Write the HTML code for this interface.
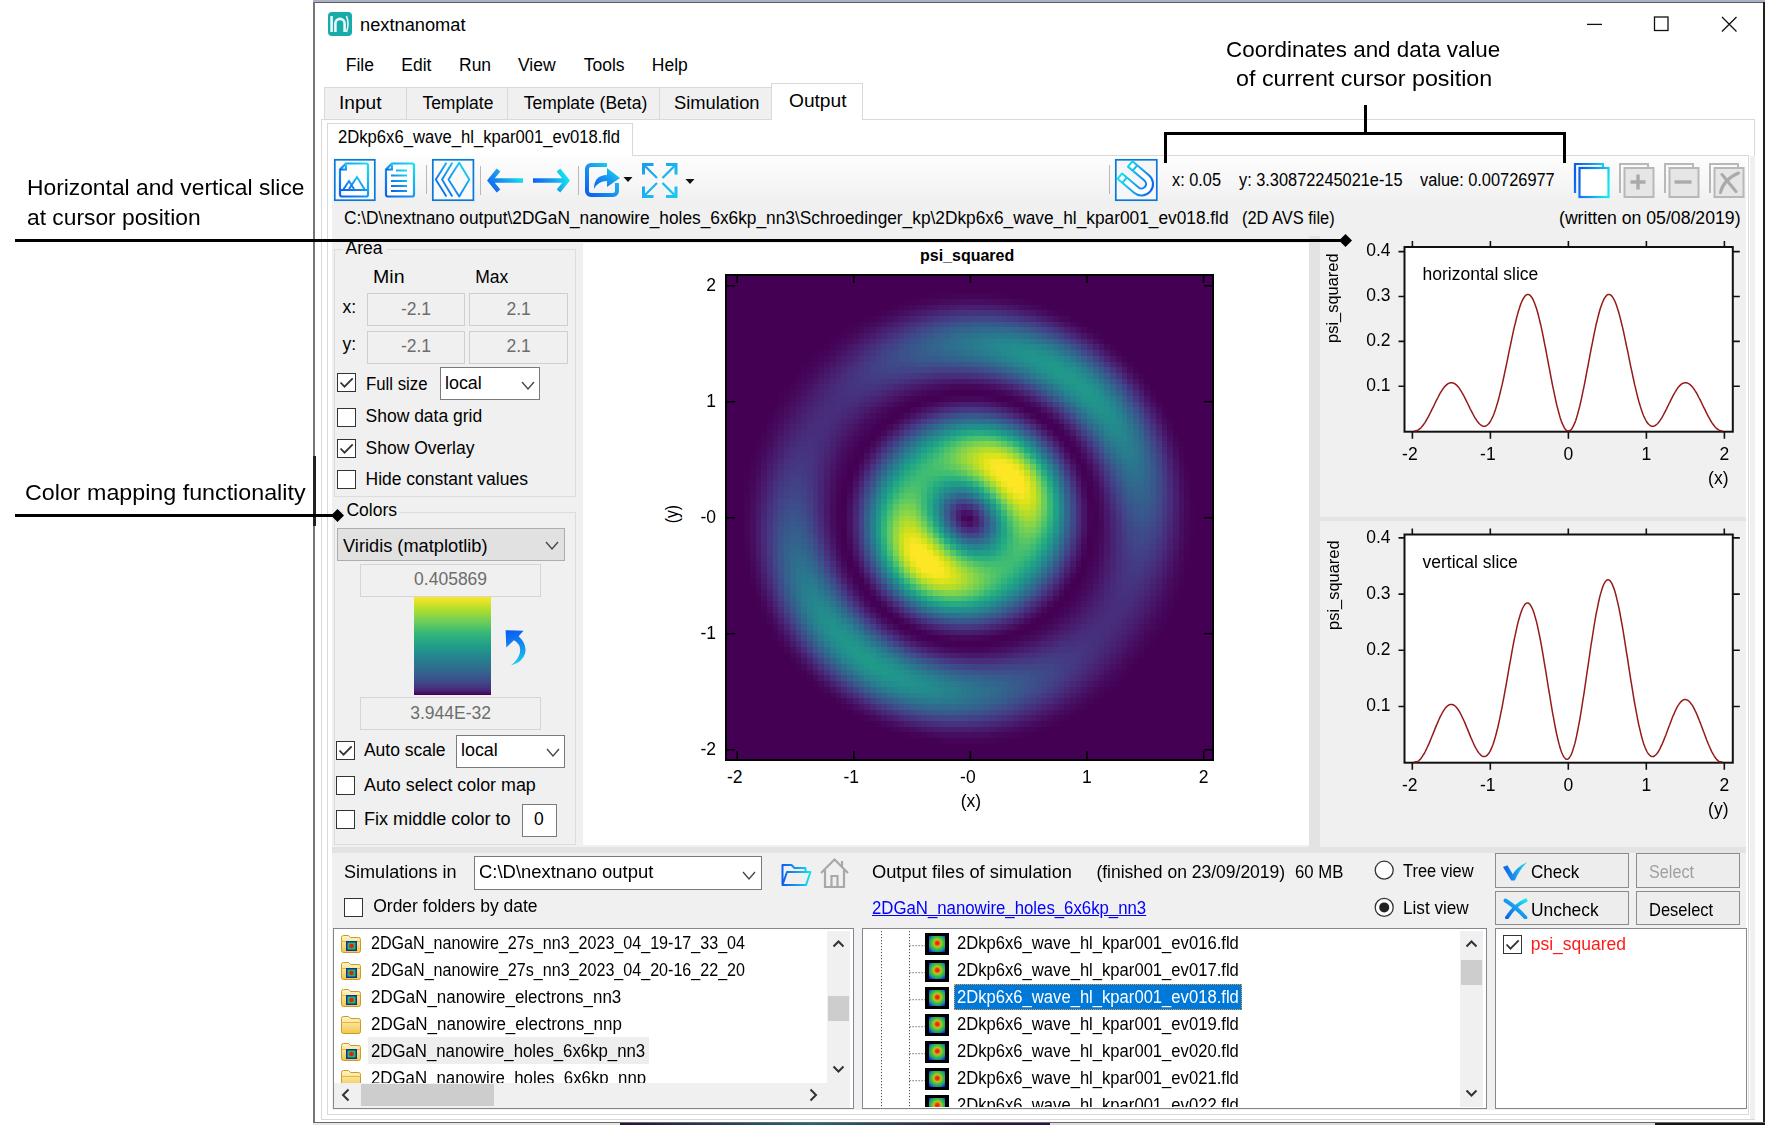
<!DOCTYPE html><html><head><meta charset="utf-8"><title>nextnanomat</title><style>html,body{margin:0;padding:0;width:1765px;height:1125px;overflow:hidden;background:#fff}body{position:relative;font-family:"Liberation Sans",sans-serif}div,span,svg,canvas{position:absolute}.t{white-space:pre;line-height:1;transform-origin:0 0;display:inline-block}</style></head><body><div style="left:313px;top:0px;width:1452px;height:2px;background:#aab2c6"></div><div style="left:313px;top:2px;width:1452px;height:1120px;background:#fff"></div><div style="left:313px;top:2px;width:1452px;height:1px;background:#5c5c5c"></div><div style="left:313px;top:2px;width:2px;height:1120px;background:#767676"></div><div style="left:313px;top:456px;width:3px;height:70px;background:#222"></div><div style="left:1763px;top:2px;width:2px;height:1120px;background:#202020"></div><div style="left:313px;top:1122px;width:1452px;height:1px;background:#6a6a6a"></div><div style="left:313px;top:1123px;width:307px;height:2px;background:#e6e6e6"></div><div style="left:620px;top:1123px;width:430px;height:2px;background:linear-gradient(90deg,#2a0f3a,#1f6a78 45%,#2a1a4a 80%,#30104a)"></div><div style="left:1050px;top:1123px;width:605px;height:2px;background:#dedede"></div><div style="left:1655px;top:1123px;width:110px;height:2px;background:#141414"></div><svg style="left:327px;top:11px" width="26" height="26" viewBox="0 0 26 26"><rect x="1" y="1" width="24" height="24" rx="4" fill="#19aaaa"/><path d="M4.6 5v16M8.4 21v-8.5a4.6 4.6 0 0 1 9.2 0v8.5" stroke="#e8fafa" stroke-width="2.6" fill="none"/><path d="M19.5 5q3 8 0 16" stroke="#e8fafa" stroke-width="1.6" fill="none"/></svg><span class="t" style="left:359.5px;top:17.3px;font-size:17.5px;color:#000;transform:scaleX(1.0427);">nextnanomat</span><svg style="left:1580px;top:10px" width="170" height="28" viewBox="0 0 170 28"><path d="M7 14.4h15" stroke="#111" stroke-width="1.3"/><rect x="74.5" y="7" width="13.5" height="13.5" fill="none" stroke="#111" stroke-width="1.3"/><path d="M142 7l14.5 14.5M156.5 7l-14.5 14.5" stroke="#111" stroke-width="1.3"/></svg><span class="t" style="left:345.7px;top:57.3px;font-size:17.5px;color:#000;">File</span><span class="t" style="left:401.3px;top:57.3px;font-size:17.5px;color:#000;">Edit</span><span class="t" style="left:459.0px;top:57.3px;font-size:17.5px;color:#000;">Run</span><span class="t" style="left:518.0px;top:57.3px;font-size:17.5px;color:#000;">View</span><span class="t" style="left:583.7px;top:57.3px;font-size:17.5px;color:#000;">Tools</span><span class="t" style="left:651.8px;top:57.3px;font-size:17.5px;color:#000;">Help</span><div style="left:321px;top:119px;width:1434px;height:1001px;border:1px solid #d9d9d9;background:#fff;box-sizing:border-box"></div><div style="left:323.5px;top:87px;width:83.5px;height:33px;background:#f0f0f0;border:1px solid #d9d9d9;box-sizing:border-box"></div><span class="t" style="left:339.0px;top:95.0px;font-size:17.5px;color:#000;transform:scaleX(1.0919);">Input</span><div style="left:406px;top:87px;width:102px;height:33px;background:#f0f0f0;border:1px solid #d9d9d9;box-sizing:border-box"></div><span class="t" style="left:422.4px;top:95.0px;font-size:17.5px;color:#000;">Template</span><div style="left:507px;top:87px;width:152.5px;height:33px;background:#f0f0f0;border:1px solid #d9d9d9;box-sizing:border-box"></div><span class="t" style="left:523.7px;top:95.0px;font-size:17.5px;color:#000;">Template (Beta)</span><div style="left:658.5px;top:87px;width:113.5px;height:33px;background:#f0f0f0;border:1px solid #d9d9d9;box-sizing:border-box"></div><span class="t" style="left:674.4px;top:95.0px;font-size:17.5px;color:#000;transform:scaleX(1.0464);">Simulation</span><div style="left:771px;top:83px;width:92px;height:37px;background:#fff;border:1px solid #d9d9d9;border-bottom:none;box-sizing:border-box"></div><span class="t" style="left:789.0px;top:92.8px;font-size:17.5px;color:#000;transform:scaleX(1.0945);">Output</span><div style="left:327px;top:155px;width:1422px;height:960px;border:1px solid #d9d9d9;box-sizing:border-box;background:#fff"></div><div style="left:326.5px;top:123px;width:306px;height:33px;background:#fff;border:1px solid #d9d9d9;border-bottom:none;box-sizing:border-box"></div><span class="t" style="left:337.8px;top:129.0px;font-size:17.5px;color:#000;transform:scaleX(0.9503);">2Dkp6x6_wave_hl_kpar001_ev018.fld</span><div style="left:332px;top:156px;width:1414px;height:48px;background:linear-gradient(#fdfdfd,#f6f6f6 60%,#efefef)"></div><div style="left:332px;top:204px;width:1414px;height:643px;background:#f0f0f0"></div><div style="left:583px;top:243px;width:726px;height:602px;background:#fff"></div><div style="left:1309px;top:236px;width:11px;height:613px;background:#e3e3e3"></div><div style="left:1320px;top:517px;width:426px;height:4px;background:#e3e3e3"></div><div style="left:332px;top:847px;width:1414px;height:6px;background:#e3e3e3"></div><div style="left:332px;top:853px;width:1414px;height:257px;background:#f0f0f0"></div><div style="left:1749.5px;top:156px;width:5.5px;height:963px;background:#f0f0f0"></div><svg style="left:333px;top:158px" width="43" height="44" viewBox="0 0 43 44"><rect x="1.8" y="1.8" width="40" height="40.4" fill="#fafafa" stroke="#0a78d7" stroke-width="1.7"/></svg><svg style="left:338px;top:160px" width="34" height="40" viewBox="0 0 34 40"><defs><linearGradient id="g1" x1="0" y1="1" x2="1" y2="0"><stop offset="0" stop-color="#0a5ff0"/><stop offset="0.55" stop-color="#1a9cf0"/><stop offset="1" stop-color="#12e6ee"/></linearGradient></defs><path d="M8 3.5h20a2 2 0 0 1 2 2v29a2 2 0 0 1-2 2H4a2 2 0 0 1-2-2V9.5L8 3.5z" fill="#fff" stroke="url(#g1)" stroke-width="2.2"/><path d="M2 9.5h6v-6" fill="none" stroke="url(#g1)" stroke-width="2"/><path d="M3 30h26M5 30l6-9 5 8M11 29l8-12 8 13" fill="none" stroke="url(#g1)" stroke-width="2"/></svg><svg style="left:384px;top:160px" width="32" height="40" viewBox="0 0 32 40"><defs><linearGradient id="g2" x1="0" y1="1" x2="1" y2="0"><stop offset="0" stop-color="#0a5ff0"/><stop offset="0.55" stop-color="#1a9cf0"/><stop offset="1" stop-color="#12e6ee"/></linearGradient></defs><path d="M8 3.5h20a2 2 0 0 1 2 2v29a2 2 0 0 1-2 2H4a2 2 0 0 1-2-2V9.5L8 3.5z" fill="#fff" stroke="url(#g2)" stroke-width="2.2"/><path d="M2 9.5h6v-6" fill="none" stroke="url(#g2)" stroke-width="2"/><path d="M12 10.5h11M7 15.5h16M7 21h16M7 26h16M7 31h16" stroke="url(#g2)" stroke-width="2"/></svg><div style="left:426px;top:165px;width:1px;height:29px;background:#b8b8b8"></div><svg style="left:431px;top:158px" width="44" height="44" viewBox="0 0 44 44"><rect x="1.8" y="1.8" width="40.6" height="40.4" fill="#fafafa" stroke="#0a78d7" stroke-width="1.7"/></svg><svg style="left:434px;top:161px" width="38" height="38" viewBox="0 0 38 38"><defs><linearGradient id="g3" x1="0" y1="1" x2="1" y2="0"><stop offset="0" stop-color="#0a5ff0"/><stop offset="0.55" stop-color="#1a9cf0"/><stop offset="1" stop-color="#12e6ee"/></linearGradient></defs><path d="M12.4 1.8L1.8 18.6 12.4 35.4M18.3 1.8L8.1 18.6 18.3 35.4M25.2 1.8L14.5 18.6 25.2 35.4 35.3 18.6z" fill="none" stroke="url(#g3)" stroke-width="1.9" stroke-linejoin="round"/></svg><div style="left:480px;top:166px;width:1px;height:29px;background:#b8b8b8"></div><svg style="left:486px;top:166px" width="40" height="30" viewBox="0 0 40 30"><defs><linearGradient id="g4" x1="0" y1="1" x2="1" y2="0.4"><stop offset="0" stop-color="#0a5ff0"/><stop offset="0.55" stop-color="#1a9cf0"/><stop offset="1" stop-color="#12e6ee"/></linearGradient></defs><path d="M12.5 4L4 14.5 12.5 25M4.5 14.5H37" fill="none" stroke="url(#g4)" stroke-width="4.6"/></svg><svg style="left:531px;top:166px" width="40" height="30" viewBox="0 0 40 30"><defs><linearGradient id="g5" x1="0" y1="0.6" x2="1" y2="0.3"><stop offset="0" stop-color="#0a5ff0"/><stop offset="0.55" stop-color="#1a9cf0"/><stop offset="1" stop-color="#12e6ee"/></linearGradient></defs><path d="M27.5 4L36 14.5 27.5 25M2 14.5H35.5" fill="none" stroke="url(#g5)" stroke-width="4.6"/></svg><div style="left:578px;top:166px;width:1px;height:29px;background:#b8b8b8"></div><svg style="left:584px;top:161px" width="38" height="37" viewBox="0 0 38 37"><defs><linearGradient id="g6" x1="0" y1="1" x2="1" y2="0"><stop offset="0" stop-color="#0a5ff0"/><stop offset="0.55" stop-color="#1a9cf0"/><stop offset="1" stop-color="#12e6ee"/></linearGradient></defs><path d="M23 4H7a4 4 0 0 0-4 4v22a4 4 0 0 0 4 4h22a4 4 0 0 0 4-4V22" fill="none" stroke="url(#g6)" stroke-width="4"/><path d="M10 28q0-14 13-14v-7l13 10-13 9v-6q-9 0-13 8z" fill="url(#g6)"/></svg><svg style="left:622px;top:175px" width="12" height="9" viewBox="0 0 12 9"><path d="M1.5 2h9l-4.5 5z" fill="#111"/></svg><svg style="left:640px;top:161px" width="40" height="39" viewBox="0 0 40 39"><defs><linearGradient id="gx" x1="0" y1="0" x2="1" y2="1"><stop offset="0" stop-color="#1c9cf0"/><stop offset="1" stop-color="#18c8f0"/></linearGradient></defs><g fill="none" stroke="url(#gx)"><path d="M3.5 13.5V3.5H13.5M26 3.5H36V13.5M3.5 25.5V35.5H13.5M26 35.5H36V25.5" stroke-width="3"/><path d="M4.5 4.5L17 17M35 4.5L22.5 17M4.5 34.5L17 22M35 34.5L22.5 22" stroke-width="2.2"/></g></svg><svg style="left:684px;top:177px" width="12" height="9" viewBox="0 0 12 9"><path d="M1.5 2h9l-4.5 5z" fill="#111"/></svg><div style="left:1109px;top:165px;width:1px;height:29px;background:#b8b8b8"></div><svg style="left:1114px;top:158px" width="45" height="44" viewBox="1114 158 45 44"><defs><linearGradient id="g7" gradientUnits="userSpaceOnUse" x1="-6" y1="-22" x2="6" y2="12"><stop offset="0" stop-color="#12e2ee"/><stop offset="0.5" stop-color="#18a0f0"/><stop offset="1" stop-color="#0a5cf0"/></linearGradient></defs><rect x="1115.8" y="159.8" width="41" height="40.4" fill="#f6f6f6" stroke="#0a78d7" stroke-width="1.7"/><g transform="translate(1141.5 184) rotate(-49.8)"><path d="M-11.5 -21.6V0A11.5 11.5 0 0 0 11.5 0V-21.6H4.5V0A4.5 4.5 0 0 1 -4.5 0V-21.6Z" fill="#fff" stroke="url(#g7)" stroke-width="2" stroke-linejoin="round"/><path d="M-11.5 -15.4H-4.5M4.5 -15.4H11.5" stroke="url(#g7)" stroke-width="2"/></g></svg><span class="t" style="left:1171.6px;top:172.0px;font-size:17.5px;color:#000;transform:scaleX(0.9327);">x: 0.05</span><span class="t" style="left:1238.7px;top:172.0px;font-size:17.5px;color:#000;transform:scaleX(0.9335);">y: 3.30872245021e-15</span><span class="t" style="left:1420.3px;top:172.0px;font-size:17.5px;color:#000;transform:scaleX(0.9353);">value: 0.00726977</span><svg style="left:1572px;top:161px" width="40" height="38" viewBox="0 0 40 38"><defs><linearGradient id="g8" x1="0" y1="0.3" x2="1" y2="0.6"><stop offset="0" stop-color="#0a5ff0"/><stop offset="0.55" stop-color="#1a9cf0"/><stop offset="1" stop-color="#12e6ee"/></linearGradient></defs><path d="M3 32V3h28v4" fill="none" stroke="url(#g8)" stroke-width="2.2"/><rect x="7.5" y="7" width="29" height="29" fill="#fff" stroke="url(#g8)" stroke-width="2.2"/></svg><svg style="left:1617.0px;top:161px" width="40" height="38" viewBox="0 0 40 38"><path d="M3 32V3h28v4" fill="none" stroke="#b8b8b8" stroke-width="2"/><rect x="7.5" y="7" width="29" height="29" fill="#e6e6e6" stroke="#b8b8b8" stroke-width="2"/><path d="M21 13.5v15M13.5 21h15" stroke="#aaaaaa" stroke-width="3.4"/></svg><svg style="left:1661.8px;top:161px" width="40" height="38" viewBox="0 0 40 38"><path d="M3 32V3h28v4" fill="none" stroke="#b8b8b8" stroke-width="2"/><rect x="7.5" y="7" width="29" height="29" fill="#e6e6e6" stroke="#b8b8b8" stroke-width="2"/><path d="M12.5 21h17" stroke="#aaaaaa" stroke-width="3.4"/></svg><svg style="left:1706.6px;top:161px" width="40" height="38" viewBox="0 0 40 38"><path d="M3 32V3h28v4" fill="none" stroke="#b8b8b8" stroke-width="2"/><rect x="7.5" y="7" width="29" height="29" fill="#e6e6e6" stroke="#b8b8b8" stroke-width="2"/><path d="M13.5 31.5q3-13 18-19.5M15 13.5l14 17" stroke="#aaaaaa" stroke-width="3" fill="none" stroke-linecap="round"/></svg><span class="t" style="left:343.5px;top:209.8px;font-size:17.5px;color:#000;transform:scaleX(0.9883);">C:\D\nextnano output\2DGaN_nanowire_holes_6x6kp_nn3\Schroedinger_kp\2Dkp6x6_wave_hl_kpar001_ev018.fld</span><span class="t" style="left:1242.4px;top:209.6px;font-size:17.5px;color:#000;transform:scaleX(0.9375);">(2D AVS file)</span><span class="t" style="left:1559.0px;top:209.6px;font-size:17.5px;color:#000;transform:scaleX(1.0085);">(written on 05/08/2019)</span><div style="left:333.5px;top:249px;width:242.0px;height:248px;border:1px solid #dcdcdc;box-sizing:border-box"></div><div style="left:342.6px;top:247px;width:44px;height:5px;background:#f0f0f0"></div><span class="t" style="left:345.6px;top:240.0px;font-size:17.5px;color:#000;">Area</span><span class="t" style="left:372.5px;top:269.2px;font-size:17.5px;color:#000;transform:scaleX(1.1171);">Min</span><span class="t" style="left:475.3px;top:269.2px;font-size:17.5px;color:#000;">Max</span><span class="t" style="left:342.4px;top:298.7px;font-size:17.5px;color:#000;">x:</span><span class="t" style="left:342.4px;top:336.0px;font-size:17.5px;color:#000;">y:</span><div style="left:366.7px;top:293.2px;width:98.80000000000001px;height:33.19999999999999px;border:1px solid #cfcfcf;box-sizing:border-box;background:#f0f0f0"></div><div style="left:366.7px;top:330.5px;width:98.80000000000001px;height:33.19999999999999px;border:1px solid #cfcfcf;box-sizing:border-box;background:#f0f0f0"></div><div style="left:469.3px;top:293.2px;width:98.80000000000001px;height:33.19999999999999px;border:1px solid #cfcfcf;box-sizing:border-box;background:#f0f0f0"></div><div style="left:469.3px;top:330.5px;width:98.80000000000001px;height:33.19999999999999px;border:1px solid #cfcfcf;box-sizing:border-box;background:#f0f0f0"></div><span class="t" style="left:400.9px;top:301.0px;font-size:17.5px;color:#6d6d6d;">-2.1</span><span class="t" style="left:400.9px;top:338.2px;font-size:17.5px;color:#6d6d6d;">-2.1</span><span class="t" style="left:506.5px;top:301.0px;font-size:17.5px;color:#6d6d6d;">2.1</span><span class="t" style="left:506.5px;top:338.2px;font-size:17.5px;color:#6d6d6d;">2.1</span><div style="left:337px;top:373px;width:19px;height:19px;border:1px solid #333;box-sizing:border-box;background:#fff"></div><svg style="left:337px;top:373px" width="19" height="19" viewBox="0 0 19 19"><path d="M3.5 9.5l4 4.2 8.2-8.4" fill="none" stroke="#333" stroke-width="1.8"/></svg><span class="t" style="left:365.5px;top:375.6px;font-size:17.5px;color:#000;transform:scaleX(0.9582);">Full size</span><div style="left:439.6px;top:367.3px;width:100.5px;height:33.2px;border:1px solid #7a7a7a;box-sizing:border-box;background:#fff"></div><span class="t" style="left:444.5px;top:375.2px;font-size:17.5px;color:#000;transform:scaleX(1.0225);">local</span><svg style="left:520.5px;top:380.5px" width="14" height="9" viewBox="0 0 14 9"><path d="M1 1l6.0 7l6.0 -7" fill="none" stroke="#444" stroke-width="1.3"/></svg><div style="left:337px;top:407.5px;width:19px;height:19px;border:1px solid #333;box-sizing:border-box;background:#fff"></div><span class="t" style="left:365.5px;top:408.4px;font-size:17.5px;color:#000;">Show data grid</span><div style="left:337px;top:439px;width:19px;height:19px;border:1px solid #333;box-sizing:border-box;background:#fff"></div><svg style="left:337px;top:439px" width="19" height="19" viewBox="0 0 19 19"><path d="M3.5 9.5l4 4.2 8.2-8.4" fill="none" stroke="#333" stroke-width="1.8"/></svg><span class="t" style="left:365.5px;top:439.7px;font-size:17.5px;color:#000;">Show Overlay</span><div style="left:337px;top:470px;width:19px;height:19px;border:1px solid #333;box-sizing:border-box;background:#fff"></div><span class="t" style="left:365.5px;top:471.1px;font-size:17.5px;color:#000;">Hide constant values</span><div style="left:333.5px;top:512px;width:242.0px;height:332.5px;border:1px solid #dcdcdc;box-sizing:border-box"></div><div style="left:343.4px;top:510px;width:56px;height:5px;background:#f0f0f0"></div><span class="t" style="left:346.4px;top:502.4px;font-size:17.5px;color:#000;">Colors</span><div style="left:337.1px;top:528px;width:228.1px;height:33.2px;border:1px solid #adadad;box-sizing:border-box;background:#e1e1e1"></div><span class="t" style="left:343.3px;top:537.6px;font-size:17.5px;color:#000;transform:scaleX(1.0415);">Viridis (matplotlib)</span><svg style="left:545px;top:541px" width="14" height="9" viewBox="0 0 14 9"><path d="M1 1l6.0 7l6.0 -7" fill="none" stroke="#444" stroke-width="1.3"/></svg><div style="left:359.7px;top:564px;width:181.8px;height:32.8px;border:1px solid #d4d4d4;box-sizing:border-box;background:#f0f0f0"></div><span class="t" style="left:414.1px;top:570.9px;font-size:17.5px;color:#6d6d6d;">0.405869</span><div style="left:414px;top:597.3px;width:77.2px;height:97.8px;background:linear-gradient(#fde725,#b5de2b 12%,#6ece58 25%,#35b779 37%,#1f9e89 50%,#26828e 62%,#31688e 75%,#3e4989 87%,#482878 95%,#440154)"></div><svg style="left:500px;top:626px" width="32" height="44" viewBox="500 626 32 44"><defs><linearGradient id="g9" gradientUnits="userSpaceOnUse" x1="510" y1="632" x2="520" y2="666"><stop offset="0" stop-color="#0a60f0"/><stop offset="0.6" stop-color="#169cf0"/><stop offset="1" stop-color="#14dcf0"/></linearGradient></defs><path d="M505.6 630.2L523.6 630.8 518.6 636.2Q527 644 525.2 653Q523 662 511 665.5Q520 658 520.2 650.5Q520.4 644 514 640.2L506.3 647.4Z" fill="url(#g9)"/></svg><div style="left:359.7px;top:697.3px;width:181.8px;height:33.2px;border:1px solid #d4d4d4;box-sizing:border-box;background:#f0f0f0"></div><span class="t" style="left:410.2px;top:705.2px;font-size:17.5px;color:#6d6d6d;">3.944E-32</span><div style="left:335.6px;top:740.5px;width:19px;height:19px;border:1px solid #333;box-sizing:border-box;background:#fff"></div><svg style="left:335.6px;top:740.5px" width="19" height="19" viewBox="0 0 19 19"><path d="M3.5 9.5l4 4.2 8.2-8.4" fill="none" stroke="#333" stroke-width="1.8"/></svg><span class="t" style="left:363.9px;top:741.6px;font-size:17.5px;color:#000;">Auto scale</span><div style="left:456.3px;top:734.6px;width:108.9px;height:33.2px;border:1px solid #7a7a7a;box-sizing:border-box;background:#fff"></div><span class="t" style="left:460.7px;top:741.6px;font-size:17.5px;color:#000;transform:scaleX(1.0225);">local</span><svg style="left:545.5px;top:747.5px" width="14" height="9" viewBox="0 0 14 9"><path d="M1 1l6.0 7l6.0 -7" fill="none" stroke="#444" stroke-width="1.3"/></svg><div style="left:335.6px;top:776px;width:19px;height:19px;border:1px solid #333;box-sizing:border-box;background:#fff"></div><span class="t" style="left:363.9px;top:777.3px;font-size:17.5px;color:#000;transform:scaleX(1.0209);">Auto select color map</span><div style="left:335.6px;top:810.3px;width:19px;height:19px;border:1px solid #333;box-sizing:border-box;background:#fff"></div><span class="t" style="left:363.9px;top:811.3px;font-size:17.5px;color:#000;transform:scaleX(1.0318);">Fix middle color to</span><div style="left:521.5px;top:804.3px;width:35.1px;height:33.2px;border:1px solid #7a7a7a;box-sizing:border-box;background:#fff"></div><span class="t" style="left:534.1px;top:811.3px;font-size:17.5px;color:#000;">0</span><div style="left:725px;top:274px;width:489px;height:487px;background:#440154"></div><div style="left:727px;top:276px;width:486px;height:485px;background:radial-gradient(circle at 243.4px 241.7px,rgb(68,1,84) 0.0px,rgb(69,7,90) 5.7px,rgb(72,25,107) 11.5px,rgb(70,51,126) 17.2px,rgb(60,79,138) 22.9px,rgb(47,108,142) 28.7px,rgb(36,136,141) 34.4px,rgb(31,161,136) 40.1px,rgb(50,180,122) 45.9px,rgb(76,194,108) 51.6px,rgb(92,200,99) 57.3px,rgb(92,200,99) 63.1px,rgb(76,194,108) 68.8px,rgb(51,181,122) 74.5px,rgb(32,162,135) 80.3px,rgb(35,139,141) 86.0px,rgb(45,112,142) 91.8px,rgb(57,86,139) 97.5px,rgb(67,59,131) 103.2px,rgb(71,35,115) 109.0px,rgb(71,16,98) 114.7px,rgb(69,4,87) 120.4px,rgb(68,1,84) 126.2px,rgb(69,6,89) 131.9px,rgb(71,17,100) 137.6px,rgb(72,32,113) 143.4px,rgb(70,48,125) 149.1px,rgb(66,62,133) 154.8px,rgb(62,74,137) 160.6px,rgb(59,82,139) 166.3px,rgb(57,86,139) 172.0px,rgb(57,85,139) 177.8px,rgb(59,81,139) 183.5px,rgb(63,72,136) 189.2px,rgb(67,61,132) 195.0px,rgb(70,48,125) 200.7px,rgb(72,34,114) 206.4px,rgb(71,21,103) 212.2px,rgb(70,10,93) 217.9px,rgb(68,3,86) 223.6px,rgb(68,1,84) 229.4px,#440154 230.4px)"></div><div style="left:952.4px;top:446.7px;width:116px;height:62px;transform:rotate(45deg);background:radial-gradient(closest-side,rgba(253,231,37,1),rgba(200,225,35,0.85) 45%,rgba(120,210,80,0.35) 80%,rgba(94,201,98,0))"></div><div style="left:970.4px;top:341.7px;width:200px;height:68px;transform:rotate(35deg);background:radial-gradient(closest-side,rgba(33,150,140,0.75),rgba(38,130,142,0.4) 60%,rgba(38,130,142,0))"></div><div style="left:872.4px;top:526.7px;width:116px;height:62px;transform:rotate(45deg);background:radial-gradient(closest-side,rgba(253,231,37,1),rgba(200,225,35,0.85) 45%,rgba(120,210,80,0.35) 80%,rgba(94,201,98,0))"></div><div style="left:770.4px;top:625.7px;width:200px;height:68px;transform:rotate(35deg);background:radial-gradient(closest-side,rgba(33,150,140,0.75),rgba(38,130,142,0.4) 60%,rgba(38,130,142,0))"></div><canvas id="hm" width="85" height="85" style="position:absolute;left:727px;top:276px;width:486px;height:485px;image-rendering:pixelated"></canvas><svg style="left:725px;top:274px" width="489" height="487" viewBox="0 0 489 487"><rect x="1" y="1" width="487" height="485" fill="none" stroke="#000" stroke-width="2"/><path d="M2 11.7h8M487 11.7h-8M12.2 2v7M12.2 485v-8" stroke="#000" stroke-width="1.6"/><path d="M2 127.7h8M487 127.7h-8M128.8 2v7M128.8 485v-8" stroke="#000" stroke-width="1.6"/><path d="M2 243.7h8M487 243.7h-8M245.4 2v7M245.4 485v-8" stroke="#000" stroke-width="1.6"/><path d="M2 359.7h8M487 359.7h-8M362.0 2v7M362.0 485v-8" stroke="#000" stroke-width="1.6"/><path d="M2 475.7h8M487 475.7h-8M478.6 2v7M478.6 485v-8" stroke="#000" stroke-width="1.6"/></svg><span class="t" style="left:920.0px;top:248.1px;font-size:16px;color:#000;font-weight:bold;">psi_squared</span><span class="t" style="left:706.3px;top:276.8px;font-size:17.5px;color:#000;">2</span><span class="t" style="left:706.3px;top:392.8px;font-size:17.5px;color:#000;">1</span><span class="t" style="left:700.4px;top:508.8px;font-size:17.5px;color:#000;">-0</span><span class="t" style="left:700.4px;top:624.8px;font-size:17.5px;color:#000;">-1</span><span class="t" style="left:700.4px;top:740.8px;font-size:17.5px;color:#000;">-2</span><span class="t" style="left:726.9px;top:768.5px;font-size:17.5px;color:#000;">-2</span><span class="t" style="left:843.5px;top:768.5px;font-size:17.5px;color:#000;">-1</span><span class="t" style="left:960.1px;top:768.5px;font-size:17.5px;color:#000;">-0</span><span class="t" style="left:1082.1px;top:768.5px;font-size:17.5px;color:#000;">1</span><span class="t" style="left:1198.7px;top:768.5px;font-size:17.5px;color:#000;">2</span><span class="t" style="left:960.8px;top:793.0px;font-size:17.5px;color:#000;">(x)</span><span class="t" style="left:662.2px;top:503.7px;font-size:17.5px;color:#000;transform-origin:50% 50%;transform:rotate(-90deg) scaleX(0.8968);line-height:20.125px">(y)</span><svg style="left:0;top:0" width="1765" height="1125" viewBox="0 0 1765 1125"><rect x="1404.5" y="247" width="328.29999999999995" height="184.7" fill="#fff" stroke="#111" stroke-width="2"/><path d="M1398.5 386.3h6M1732.8 386.3h7M1398.5 341.4h6M1732.8 341.4h7M1398.5 296.5h6M1732.8 296.5h7M1398.5 251.6h6M1732.8 251.6h7M1412.4 431.7v7M1412.4 247v-6M1490.4 431.7v7M1490.4 247v-6M1568.4 431.7v7M1568.4 247v-6M1646.4 431.7v7M1646.4 247v-6M1724.4 431.7v7M1724.4 247v-6" stroke="#111" stroke-width="1.6"/><polyline points="1414.4,430.7 1415.2,430.7 1416.1,430.7 1416.9,430.6 1417.7,430.2 1418.5,429.7 1419.3,429.1 1420.2,428.4 1421.0,427.7 1421.8,426.8 1422.6,425.8 1423.4,424.7 1424.3,423.5 1425.1,422.3 1425.9,421.0 1426.7,419.6 1427.5,418.2 1428.4,416.7 1429.2,415.1 1430.0,413.5 1430.8,411.9 1431.6,410.2 1432.4,408.6 1433.3,406.9 1434.1,405.2 1434.9,403.5 1435.7,401.8 1436.5,400.2 1437.4,398.5 1438.2,397.0 1439.0,395.4 1439.8,393.9 1440.6,392.5 1441.5,391.2 1442.3,389.9 1443.1,388.7 1443.9,387.6 1444.7,386.6 1445.6,385.7 1446.4,384.9 1447.2,384.3 1448.0,383.7 1448.8,383.3 1449.6,382.9 1450.5,382.7 1451.3,382.7 1452.1,382.7 1452.9,382.9 1453.7,383.2 1454.6,383.6 1455.4,384.2 1456.2,384.9 1457.0,385.6 1457.8,386.5 1458.7,387.5 1459.5,388.6 1460.3,389.8 1461.1,391.1 1461.9,392.5 1462.7,393.9 1463.6,395.4 1464.4,397.0 1465.2,398.6 1466.0,400.2 1466.8,401.9 1467.7,403.5 1468.5,405.2 1469.3,406.9 1470.1,408.6 1470.9,410.2 1471.8,411.9 1472.6,413.4 1473.4,415.0 1474.2,416.4 1475.0,417.8 1475.9,419.2 1476.7,420.4 1477.5,421.5 1478.3,422.6 1479.1,423.5 1479.9,424.3 1480.8,425.0 1481.6,425.5 1482.4,425.9 1483.2,426.2 1484.0,426.3 1484.9,426.2 1485.7,426.0 1486.5,425.6 1487.3,425.0 1488.1,424.3 1489.0,423.4 1489.8,422.3 1490.6,421.0 1491.4,419.5 1492.2,417.9 1493.1,416.0 1493.9,414.0 1494.7,411.8 1495.5,409.5 1496.3,406.9 1497.1,404.2 1498.0,401.3 1498.8,398.3 1499.6,395.1 1500.4,391.8 1501.2,388.4 1502.1,384.9 1502.9,381.2 1503.7,377.5 1504.5,373.6 1505.3,369.8 1506.2,365.8 1507.0,361.9 1507.8,357.9 1508.6,353.9 1509.4,349.9 1510.3,345.9 1511.1,342.0 1511.9,338.2 1512.7,334.4 1513.5,330.7 1514.3,327.1 1515.2,323.6 1516.0,320.3 1516.8,317.1 1517.6,314.1 1518.4,311.2 1519.3,308.6 1520.1,306.1 1520.9,303.8 1521.7,301.8 1522.5,300.0 1523.4,298.5 1524.2,297.1 1525.0,296.1 1525.8,295.3 1526.6,294.7 1527.5,294.4 1528.3,294.4 1529.1,294.7 1529.9,295.2 1530.7,296.0 1531.5,297.0 1532.4,298.3 1533.2,299.9 1534.0,301.7 1534.8,303.7 1535.6,306.0 1536.5,308.6 1537.3,311.3 1538.1,314.3 1538.9,317.4 1539.7,320.7 1540.6,324.2 1541.4,327.9 1542.2,331.7 1543.0,335.6 1543.8,339.7 1544.6,343.8 1545.5,348.0 1546.3,352.3 1547.1,356.6 1547.9,360.9 1548.7,365.3 1549.6,369.6 1550.4,374.0 1551.2,378.3 1552.0,382.5 1552.8,386.6 1553.7,390.6 1554.5,394.6 1555.3,398.4 1556.1,402.0 1556.9,405.5 1557.8,408.9 1558.6,412.0 1559.4,414.9 1560.2,417.7 1561.0,420.2 1561.8,422.4 1562.7,424.4 1563.5,426.2 1564.3,427.7 1565.1,429.0 1565.9,429.9 1566.8,430.6 1567.6,430.7 1568.4,430.7 1569.2,430.7 1570.0,430.6 1570.9,429.9 1571.7,429.0 1572.5,427.7 1573.3,426.2 1574.1,424.4 1575.0,422.4 1575.8,420.2 1576.6,417.7 1577.4,414.9 1578.2,412.0 1579.0,408.9 1579.9,405.5 1580.7,402.0 1581.5,398.4 1582.3,394.6 1583.1,390.6 1584.0,386.6 1584.8,382.5 1585.6,378.3 1586.4,374.0 1587.2,369.6 1588.1,365.3 1588.9,360.9 1589.7,356.6 1590.5,352.3 1591.3,348.0 1592.2,343.8 1593.0,339.7 1593.8,335.6 1594.6,331.7 1595.4,327.9 1596.2,324.2 1597.1,320.7 1597.9,317.4 1598.7,314.3 1599.5,311.3 1600.3,308.6 1601.2,306.0 1602.0,303.7 1602.8,301.7 1603.6,299.9 1604.4,298.3 1605.3,297.0 1606.1,296.0 1606.9,295.2 1607.7,294.7 1608.5,294.4 1609.4,294.4 1610.2,294.7 1611.0,295.3 1611.8,296.1 1612.6,297.1 1613.4,298.5 1614.3,300.0 1615.1,301.8 1615.9,303.8 1616.7,306.1 1617.5,308.6 1618.4,311.2 1619.2,314.1 1620.0,317.1 1620.8,320.3 1621.6,323.6 1622.5,327.1 1623.3,330.7 1624.1,334.4 1624.9,338.2 1625.7,342.0 1626.5,345.9 1627.4,349.9 1628.2,353.9 1629.0,357.9 1629.8,361.9 1630.6,365.8 1631.5,369.8 1632.3,373.6 1633.1,377.5 1633.9,381.2 1634.7,384.9 1635.6,388.4 1636.4,391.8 1637.2,395.1 1638.0,398.3 1638.8,401.3 1639.7,404.2 1640.5,406.9 1641.3,409.5 1642.1,411.8 1642.9,414.0 1643.7,416.0 1644.6,417.9 1645.4,419.5 1646.2,421.0 1647.0,422.3 1647.8,423.4 1648.7,424.3 1649.5,425.0 1650.3,425.6 1651.1,426.0 1651.9,426.2 1652.8,426.3 1653.6,426.2 1654.4,425.9 1655.2,425.5 1656.0,425.0 1656.9,424.3 1657.7,423.5 1658.5,422.6 1659.3,421.5 1660.1,420.4 1660.9,419.2 1661.8,417.8 1662.6,416.4 1663.4,415.0 1664.2,413.4 1665.0,411.9 1665.9,410.2 1666.7,408.6 1667.5,406.9 1668.3,405.2 1669.1,403.5 1670.0,401.9 1670.8,400.2 1671.6,398.6 1672.4,397.0 1673.2,395.4 1674.1,393.9 1674.9,392.5 1675.7,391.1 1676.5,389.8 1677.3,388.6 1678.1,387.5 1679.0,386.5 1679.8,385.6 1680.6,384.9 1681.4,384.2 1682.2,383.6 1683.1,383.2 1683.9,382.9 1684.7,382.7 1685.5,382.7 1686.3,382.7 1687.2,382.9 1688.0,383.3 1688.8,383.7 1689.6,384.3 1690.4,384.9 1691.2,385.7 1692.1,386.6 1692.9,387.6 1693.7,388.7 1694.5,389.9 1695.3,391.2 1696.2,392.5 1697.0,393.9 1697.8,395.4 1698.6,397.0 1699.4,398.5 1700.3,400.2 1701.1,401.8 1701.9,403.5 1702.7,405.2 1703.5,406.9 1704.4,408.6 1705.2,410.2 1706.0,411.9 1706.8,413.5 1707.6,415.1 1708.4,416.7 1709.3,418.2 1710.1,419.6 1710.9,421.0 1711.7,422.3 1712.5,423.5 1713.4,424.7 1714.2,425.8 1715.0,426.8 1715.8,427.7 1716.6,428.4 1717.5,429.1 1718.3,429.7 1719.1,430.2 1719.9,430.6 1720.7,430.7 1721.6,430.7 1722.4,430.7" fill="none" stroke="#951a1a" stroke-width="1.5"/></svg><span class="t" style="left:1366.2px;top:377.1px;font-size:17.5px;color:#000;">0.1</span><span class="t" style="left:1366.2px;top:332.2px;font-size:17.5px;color:#000;">0.2</span><span class="t" style="left:1366.2px;top:287.3px;font-size:17.5px;color:#000;">0.3</span><span class="t" style="left:1366.2px;top:242.4px;font-size:17.5px;color:#000;">0.4</span><span class="t" style="left:1402.1px;top:446.2px;font-size:17.5px;color:#000;">-2</span><span class="t" style="left:1480.1px;top:446.2px;font-size:17.5px;color:#000;">-1</span><span class="t" style="left:1563.5px;top:446.2px;font-size:17.5px;color:#000;">0</span><span class="t" style="left:1641.5px;top:446.2px;font-size:17.5px;color:#000;">1</span><span class="t" style="left:1719.5px;top:446.2px;font-size:17.5px;color:#000;">2</span><span class="t" style="left:1708.1px;top:469.7px;font-size:17.5px;color:#000;">(x)</span><span class="t" style="left:1422.5px;top:266.0px;font-size:17.5px;color:#000;">horizontal slice</span><svg style="left:0;top:0" width="1765" height="1125" viewBox="0 0 1765 1125"><rect x="1404.5" y="534.5" width="328.29999999999995" height="228.20000000000005" fill="#fff" stroke="#111" stroke-width="2"/><path d="M1398.5 706.5h6M1732.8 706.5h7M1398.5 650.3h6M1732.8 650.3h7M1398.5 594.1h6M1732.8 594.1h7M1398.5 537.9h6M1732.8 537.9h7M1412.3 762.7v7M1412.3 534.5v-6M1490.3 762.7v7M1490.3 534.5v-6M1568.3 762.7v7M1568.3 534.5v-6M1646.3 762.7v7M1646.3 534.5v-6M1724.3 762.7v7M1724.3 534.5v-6" stroke="#111" stroke-width="1.6"/><polyline points="1414.3,761.7 1415.1,761.7 1416.0,761.7 1416.8,761.7 1417.6,761.6 1418.4,761.0 1419.2,760.3 1420.1,759.4 1420.9,758.5 1421.7,757.4 1422.5,756.2 1423.3,754.9 1424.2,753.5 1425.0,752.0 1425.8,750.4 1426.6,748.8 1427.4,747.0 1428.3,745.2 1429.1,743.4 1429.9,741.4 1430.7,739.5 1431.5,737.5 1432.3,735.5 1433.2,733.4 1434.0,731.4 1434.8,729.4 1435.6,727.4 1436.4,725.4 1437.3,723.4 1438.1,721.5 1438.9,719.7 1439.7,717.9 1440.5,716.2 1441.4,714.6 1442.2,713.0 1443.0,711.6 1443.8,710.3 1444.6,709.1 1445.5,708.0 1446.3,707.1 1447.1,706.3 1447.9,705.6 1448.7,705.1 1449.5,704.7 1450.4,704.4 1451.2,704.4 1452.0,704.4 1452.8,704.7 1453.6,705.0 1454.5,705.5 1455.3,706.2 1456.1,707.0 1456.9,708.0 1457.7,709.0 1458.6,710.2 1459.4,711.6 1460.2,713.0 1461.0,714.5 1461.8,716.2 1462.6,717.9 1463.5,719.7 1464.3,721.5 1465.1,723.4 1465.9,725.4 1466.7,727.4 1467.6,729.4 1468.4,731.4 1469.2,733.4 1470.0,735.4 1470.8,737.4 1471.7,739.3 1472.5,741.2 1473.3,743.0 1474.1,744.7 1474.9,746.4 1475.8,748.0 1476.6,749.5 1477.4,750.8 1478.2,752.0 1479.0,753.1 1479.8,754.1 1480.7,754.9 1481.5,755.6 1482.3,756.1 1483.1,756.4 1483.9,756.5 1484.8,756.5 1485.6,756.2 1486.4,755.8 1487.2,755.1 1488.0,754.3 1488.9,753.2 1489.7,751.9 1490.5,750.4 1491.3,748.6 1492.1,746.7 1493.0,744.5 1493.8,742.1 1494.6,739.5 1495.4,736.7 1496.2,733.7 1497.0,730.5 1497.9,727.1 1498.7,723.5 1499.5,719.8 1500.3,715.9 1501.1,711.8 1502.0,707.6 1502.8,703.3 1503.6,698.9 1504.4,694.4 1505.2,689.8 1506.1,685.1 1506.9,680.5 1507.7,675.8 1508.5,671.1 1509.3,666.4 1510.2,661.7 1511.0,657.1 1511.8,652.6 1512.6,648.2 1513.4,643.9 1514.2,639.7 1515.1,635.7 1515.9,631.8 1516.7,628.1 1517.5,624.6 1518.3,621.4 1519.2,618.3 1520.0,615.5 1520.8,613.0 1521.6,610.7 1522.4,608.7 1523.3,607.0 1524.1,605.6 1524.9,604.4 1525.7,603.6 1526.5,603.1 1527.3,603.0 1528.2,603.1 1529.0,603.5 1529.8,604.3 1530.6,605.4 1531.4,606.8 1532.3,608.5 1533.1,610.5 1533.9,612.8 1534.7,615.4 1535.5,618.3 1536.4,621.4 1537.2,624.7 1538.0,628.4 1538.8,632.2 1539.6,636.2 1540.5,640.5 1541.3,644.9 1542.1,649.4 1542.9,654.1 1543.7,658.9 1544.5,663.8 1545.4,668.8 1546.2,673.9 1547.0,679.0 1547.8,684.0 1548.6,689.1 1549.5,694.2 1550.3,699.2 1551.1,704.1 1551.9,708.9 1552.7,713.6 1553.6,718.2 1554.4,722.7 1555.2,726.9 1556.0,731.0 1556.8,734.8 1557.7,738.4 1558.5,741.8 1559.3,744.9 1560.1,747.7 1560.9,750.3 1561.7,752.5 1562.6,754.5 1563.4,756.1 1564.2,757.4 1565.0,758.3 1565.8,759.0 1566.7,759.2 1567.5,759.2 1568.3,758.8 1569.1,758.0 1569.9,756.9 1570.8,755.5 1571.6,753.7 1572.4,751.6 1573.2,749.1 1574.0,746.4 1574.9,743.4 1575.7,740.0 1576.5,736.4 1577.3,732.5 1578.1,728.4 1578.9,724.1 1579.8,719.5 1580.6,714.7 1581.4,709.8 1582.2,704.7 1583.0,699.4 1583.9,694.1 1584.7,688.6 1585.5,683.1 1586.3,677.5 1587.1,671.8 1588.0,666.2 1588.8,660.6 1589.6,655.0 1590.4,649.5 1591.2,644.0 1592.1,638.7 1592.9,633.5 1593.7,628.4 1594.5,623.5 1595.3,618.7 1596.1,614.2 1597.0,609.9 1597.8,605.8 1598.6,602.0 1599.4,598.4 1600.2,595.1 1601.1,592.1 1601.9,589.5 1602.7,587.1 1603.5,585.0 1604.3,583.3 1605.2,581.9 1606.0,580.9 1606.8,580.2 1607.6,579.8 1608.4,579.8 1609.2,580.1 1610.1,580.8 1610.9,581.8 1611.7,583.2 1612.5,584.9 1613.3,586.9 1614.2,589.2 1615.0,591.8 1615.8,594.7 1616.6,597.9 1617.4,601.3 1618.3,605.0 1619.1,608.9 1619.9,613.0 1620.7,617.4 1621.5,621.9 1622.4,626.6 1623.2,631.4 1624.0,636.4 1624.8,641.4 1625.6,646.6 1626.4,651.8 1627.3,657.0 1628.1,662.3 1628.9,667.6 1629.7,672.9 1630.5,678.1 1631.4,683.3 1632.2,688.4 1633.0,693.4 1633.8,698.3 1634.6,703.0 1635.5,707.7 1636.3,712.1 1637.1,716.4 1637.9,720.6 1638.7,724.5 1639.6,728.2 1640.4,731.7 1641.2,735.0 1642.0,738.1 1642.8,740.9 1643.6,743.5 1644.5,745.9 1645.3,748.0 1646.1,749.9 1646.9,751.5 1647.7,752.9 1648.6,754.1 1649.4,755.0 1650.2,755.7 1651.0,756.2 1651.8,756.5 1652.7,756.5 1653.5,756.4 1654.3,756.0 1655.1,755.4 1655.9,754.7 1656.8,753.8 1657.6,752.7 1658.4,751.5 1659.2,750.1 1660.0,748.6 1660.8,746.9 1661.7,745.2 1662.5,743.3 1663.3,741.4 1664.1,739.4 1664.9,737.3 1665.8,735.2 1666.6,733.0 1667.4,730.8 1668.2,728.6 1669.0,726.4 1669.9,724.2 1670.7,722.0 1671.5,719.9 1672.3,717.8 1673.1,715.8 1674.0,713.9 1674.8,712.0 1675.6,710.2 1676.4,708.6 1677.2,707.0 1678.0,705.6 1678.9,704.4 1679.7,703.2 1680.5,702.2 1681.3,701.4 1682.1,700.7 1683.0,700.1 1683.8,699.8 1684.6,699.6 1685.4,699.5 1686.2,699.7 1687.1,699.9 1687.9,700.4 1688.7,701.0 1689.5,701.7 1690.3,702.6 1691.1,703.7 1692.0,704.9 1692.8,706.2 1693.6,707.6 1694.4,709.2 1695.2,710.9 1696.1,712.6 1696.9,714.5 1697.7,716.4 1698.5,718.4 1699.3,720.5 1700.2,722.6 1701.0,724.8 1701.8,726.9 1702.6,729.1 1703.4,731.3 1704.3,733.5 1705.1,735.7 1705.9,737.8 1706.7,740.0 1707.5,742.0 1708.3,744.0 1709.2,746.0 1710.0,747.8 1710.8,749.6 1711.6,751.3 1712.4,752.9 1713.3,754.4 1714.1,755.8 1714.9,757.0 1715.7,758.2 1716.5,759.2 1717.4,760.1 1718.2,760.9 1719.0,761.5 1719.8,761.7 1720.6,761.7 1721.5,761.7 1722.3,761.7" fill="none" stroke="#951a1a" stroke-width="1.5"/></svg><span class="t" style="left:1366.2px;top:697.3px;font-size:17.5px;color:#000;">0.1</span><span class="t" style="left:1366.2px;top:641.1px;font-size:17.5px;color:#000;">0.2</span><span class="t" style="left:1366.2px;top:584.9px;font-size:17.5px;color:#000;">0.3</span><span class="t" style="left:1366.2px;top:528.7px;font-size:17.5px;color:#000;">0.4</span><span class="t" style="left:1402.0px;top:777.0px;font-size:17.5px;color:#000;">-2</span><span class="t" style="left:1480.0px;top:777.0px;font-size:17.5px;color:#000;">-1</span><span class="t" style="left:1563.4px;top:777.0px;font-size:17.5px;color:#000;">0</span><span class="t" style="left:1641.4px;top:777.0px;font-size:17.5px;color:#000;">1</span><span class="t" style="left:1719.4px;top:777.0px;font-size:17.5px;color:#000;">2</span><span class="t" style="left:1708.1px;top:800.5px;font-size:17.5px;color:#000;">(y)</span><span class="t" style="left:1422.5px;top:553.5px;font-size:17.5px;color:#000;">vertical slice</span><span class="t" style="left:1290.4px;top:289.4px;font-size:16px;color:#000;transform-origin:50% 50%;transform:rotate(-90deg) scaleX(1.0267);line-height:18.4px">psi_squared</span><span class="t" style="left:1290.9px;top:575.9px;font-size:16px;color:#000;transform-origin:50% 50%;transform:rotate(-90deg) scaleX(1.0267);line-height:18.4px">psi_squared</span><span class="t" style="left:344.3px;top:863.7px;font-size:17.5px;color:#000;transform:scaleX(1.0327);">Simulations in</span><div style="left:473.8px;top:856.3px;width:288px;height:33.5px;border:1px solid #7a7a7a;box-sizing:border-box;background:#fff"></div><span class="t" style="left:478.5px;top:863.7px;font-size:17.5px;color:#000;transform:scaleX(1.0539);">C:\D\nextnano output</span><svg style="left:742px;top:870.5px" width="14" height="9" viewBox="0 0 14 9"><path d="M1 1l6.0 7l6.0 -7" fill="none" stroke="#444" stroke-width="1.3"/></svg><svg style="left:779px;top:860px" width="34" height="30" viewBox="0 0 34 30"><defs><linearGradient id="ga" x1="0" y1="0.5" x2="1" y2="0.5"><stop offset="0" stop-color="#0a5ff0"/><stop offset="0.55" stop-color="#1a9cf0"/><stop offset="1" stop-color="#12e6ee"/></linearGradient></defs><path d="M3.5 25V5h9l3 3h11v4M3.5 25l4.5-13h23.5l-4.5 13z" fill="none" stroke="url(#ga)" stroke-width="2" stroke-linejoin="round"/></svg><svg style="left:818px;top:856px" width="34" height="34" viewBox="0 0 34 34"><path d="M3 17L16.5 3.5 30 17M7 14v17h19V14M13.5 31v-11h6v11M24 5v6" fill="none" stroke="#a8a8a8" stroke-width="2.2"/></svg><div style="left:344.3px;top:897.8px;width:19px;height:19px;border:1px solid #333;box-sizing:border-box;background:#fff"></div><span class="t" style="left:373.2px;top:897.7px;font-size:17.5px;color:#000;">Order folders by date</span><div style="left:332.7px;top:927.7px;width:521px;height:181.5px;border:1px solid #828790;box-sizing:border-box;background:#fff"></div><div style="left:368.3px;top:1037.3px;width:280.5px;height:26.4px;background:#eeeeee"></div><div style="left:334px;top:929px;width:493px;height:155px;overflow:hidden"><svg style="left:6px;top:4px" width="23" height="21" viewBox="0 0 23 21"><defs><linearGradient id="fg" x1="0" y1="0" x2="0" y2="1"><stop offset="0" stop-color="#fff6c8"/><stop offset="1" stop-color="#f2c64a"/></linearGradient></defs><path d="M1.5 4.5q0-2 2-2h5l2 2h8q2 0 2 2v11q0 2-2 2h-15q-2 0-2-2z" fill="url(#fg)" stroke="#c89a2a" stroke-width="1"/><path d="M1.5 8.5h19" stroke="#e6b640" stroke-width="1"/><rect x="6" y="8" width="11" height="10" fill="#1030a0"/><rect x="7.5" y="9.5" width="8" height="7" fill="#20c060"/><circle cx="11.5" cy="13" r="2.3" fill="#e02010"/></svg><span class="t" style="left:37.4px;top:6.0px;font-size:17.5px;color:#000;transform:scaleX(0.9195);">2DGaN_nanowire_27s_nn3_2023_04_19-17_33_04</span><svg style="left:6px;top:31px" width="23" height="21" viewBox="0 0 23 21"><defs><linearGradient id="fg" x1="0" y1="0" x2="0" y2="1"><stop offset="0" stop-color="#fff6c8"/><stop offset="1" stop-color="#f2c64a"/></linearGradient></defs><path d="M1.5 4.5q0-2 2-2h5l2 2h8q2 0 2 2v11q0 2-2 2h-15q-2 0-2-2z" fill="url(#fg)" stroke="#c89a2a" stroke-width="1"/><path d="M1.5 8.5h19" stroke="#e6b640" stroke-width="1"/><rect x="6" y="8" width="11" height="10" fill="#1030a0"/><rect x="7.5" y="9.5" width="8" height="7" fill="#20c060"/><circle cx="11.5" cy="13" r="2.3" fill="#e02010"/></svg><span class="t" style="left:37.4px;top:33.0px;font-size:17.5px;color:#000;transform:scaleX(0.9195);">2DGaN_nanowire_27s_nn3_2023_04_20-16_22_20</span><svg style="left:6px;top:58px" width="23" height="21" viewBox="0 0 23 21"><defs><linearGradient id="fg" x1="0" y1="0" x2="0" y2="1"><stop offset="0" stop-color="#fff6c8"/><stop offset="1" stop-color="#f2c64a"/></linearGradient></defs><path d="M1.5 4.5q0-2 2-2h5l2 2h8q2 0 2 2v11q0 2-2 2h-15q-2 0-2-2z" fill="url(#fg)" stroke="#c89a2a" stroke-width="1"/><path d="M1.5 8.5h19" stroke="#e6b640" stroke-width="1"/><rect x="6" y="8" width="11" height="10" fill="#1030a0"/><rect x="7.5" y="9.5" width="8" height="7" fill="#20c060"/><circle cx="11.5" cy="13" r="2.3" fill="#e02010"/></svg><span class="t" style="left:37.4px;top:60.0px;font-size:17.5px;color:#000;transform:scaleX(0.9669);">2DGaN_nanowire_electrons_nn3</span><svg style="left:6px;top:85px" width="23" height="21" viewBox="0 0 23 21"><defs><linearGradient id="fg" x1="0" y1="0" x2="0" y2="1"><stop offset="0" stop-color="#fff6c8"/><stop offset="1" stop-color="#f2c64a"/></linearGradient></defs><path d="M1.5 4.5q0-2 2-2h5l2 2h8q2 0 2 2v11q0 2-2 2h-15q-2 0-2-2z" fill="url(#fg)" stroke="#c89a2a" stroke-width="1"/><path d="M1.5 8.5h19" stroke="#e6b640" stroke-width="1"/></svg><span class="t" style="left:37.4px;top:87.0px;font-size:17.5px;color:#000;transform:scaleX(0.9696);">2DGaN_nanowire_electrons_nnp</span><svg style="left:6px;top:112px" width="23" height="21" viewBox="0 0 23 21"><defs><linearGradient id="fg" x1="0" y1="0" x2="0" y2="1"><stop offset="0" stop-color="#fff6c8"/><stop offset="1" stop-color="#f2c64a"/></linearGradient></defs><path d="M1.5 4.5q0-2 2-2h5l2 2h8q2 0 2 2v11q0 2-2 2h-15q-2 0-2-2z" fill="url(#fg)" stroke="#c89a2a" stroke-width="1"/><path d="M1.5 8.5h19" stroke="#e6b640" stroke-width="1"/><rect x="6" y="8" width="11" height="10" fill="#1030a0"/><rect x="7.5" y="9.5" width="8" height="7" fill="#20c060"/><circle cx="11.5" cy="13" r="2.3" fill="#e02010"/></svg><span class="t" style="left:37.4px;top:114.0px;font-size:17.5px;color:#000;transform:scaleX(0.9586);">2DGaN_nanowire_holes_6x6kp_nn3</span><svg style="left:6px;top:139px" width="23" height="21" viewBox="0 0 23 21"><defs><linearGradient id="fg" x1="0" y1="0" x2="0" y2="1"><stop offset="0" stop-color="#fff6c8"/><stop offset="1" stop-color="#f2c64a"/></linearGradient></defs><path d="M1.5 4.5q0-2 2-2h5l2 2h8q2 0 2 2v11q0 2-2 2h-15q-2 0-2-2z" fill="url(#fg)" stroke="#c89a2a" stroke-width="1"/><path d="M1.5 8.5h19" stroke="#e6b640" stroke-width="1"/></svg><span class="t" style="left:37.4px;top:141.0px;font-size:17.5px;color:#000;transform:scaleX(0.9621);">2DGaN_nanowire_holes_6x6kp_nnp</span></div><div style="left:827.3px;top:931px;width:23px;height:152px;background:#f0f0f0"></div><div style="left:828.3px;top:995.8px;width:21px;height:24.90000000000009px;background:#cdcdcd"></div><svg style="left:832.3px;top:939px" width="13" height="9" viewBox="0 0 13 9"><path d="M1.5 7.5l5-5 5 5" fill="none" stroke="#333" stroke-width="2"/></svg><svg style="left:832.3px;top:1065px" width="13" height="9" viewBox="0 0 13 9"><path d="M1.5 1.5l5 5 5-5" fill="none" stroke="#333" stroke-width="2"/></svg><div style="left:334px;top:1083px;width:493.3px;height:24.5px;background:#f0f0f0"></div><div style="left:360.5px;top:1084px;width:133.4px;height:21.5px;background:#cdcdcd"></div><svg style="left:340px;top:1088px" width="12" height="14" viewBox="0 0 12 14"><path d="M8.5 1.5l-5.5 5.5 5.5 5.5" fill="none" stroke="#333" stroke-width="2"/></svg><svg style="left:808px;top:1088px" width="12" height="14" viewBox="0 0 12 14"><path d="M2.5 1.5l5.5 5.5-5.5 5.5" fill="none" stroke="#333" stroke-width="2"/></svg><div style="left:827.3px;top:1083px;width:23px;height:24.5px;background:#f0f0f0"></div><span class="t" style="left:872.2px;top:863.5px;font-size:17.5px;color:#000;transform:scaleX(1.0437);">Output files of simulation</span><span class="t" style="left:1096.4px;top:863.5px;font-size:17.5px;color:#000;">(finished on 23/09/2019)</span><span class="t" style="left:1295.3px;top:863.5px;font-size:17.5px;color:#000;transform:scaleX(0.9569);">60 MB</span><span class="t" style="left:872.2px;top:899.5px;font-size:17.5px;color:#0000ff;transform:scaleX(0.9586);text-decoration:underline;">2DGaN_nanowire_holes_6x6kp_nn3</span><svg style="left:1374px;top:860px" width="21" height="21" viewBox="0 0 21 21"><circle cx="10.2" cy="10.2" r="9" fill="#fff" stroke="#333" stroke-width="1.3"/></svg><span class="t" style="left:1403.1px;top:862.8px;font-size:17.5px;color:#000;transform:scaleX(0.9375);">Tree view</span><svg style="left:1374px;top:897px" width="21" height="21" viewBox="0 0 21 21"><circle cx="10.2" cy="10.4" r="9" fill="#fff" stroke="#333" stroke-width="1.3"/><circle cx="10.2" cy="10.4" r="5" fill="#222"/></svg><span class="t" style="left:1403.1px;top:899.7px;font-size:17.5px;color:#000;transform:scaleX(0.9791);">List view</span><div style="left:861.5px;top:927.7px;width:625px;height:181.5px;border:1px solid #828790;box-sizing:border-box;background:#fff"></div><div style="left:863px;top:929px;width:596px;height:178px;overflow:hidden"><svg style="left:0;top:0" width="100" height="180"><path d="M18.5 2V180M46.5 2V180" stroke="#505050" stroke-width="1" stroke-dasharray="1.2 1.8"/><path d="M46.5 16.7h16" stroke="#505050" stroke-width="1" stroke-dasharray="1.2 1.8"/><path d="M46.5 43.7h16" stroke="#505050" stroke-width="1" stroke-dasharray="1.2 1.8"/><path d="M46.5 70.7h16" stroke="#505050" stroke-width="1" stroke-dasharray="1.2 1.8"/><path d="M46.5 97.7h16" stroke="#505050" stroke-width="1" stroke-dasharray="1.2 1.8"/><path d="M46.5 124.7h16" stroke="#505050" stroke-width="1" stroke-dasharray="1.2 1.8"/><path d="M46.5 151.7h16" stroke="#505050" stroke-width="1" stroke-dasharray="1.2 1.8"/><path d="M46.5 178.7h16" stroke="#505050" stroke-width="1" stroke-dasharray="1.2 1.8"/></svg><div style="left:91px;top:54.89999999999998px;width:287.6px;height:26.1px;background:#0078d7;outline:1px dotted #f0a030;outline-offset:-1px"></div><div style="left:62.200000000000045px;top:4.2000000000000455px;width:24px;height:22px;background:#000"></div><div style="left:66.20000000000005px;top:7.2000000000000455px;width:16px;height:16px;background:radial-gradient(circle at 52% 45%,#e01818 0,#e84010 1.8px,#c8c020 3.6px,#48c838 5.6px,#30b050 7px,#1a90a0 8.4px,#1040e0 10px,#0818a0 12px)"></div><span class="t" style="left:93.9px;top:6.0px;font-size:17.5px;color:#000;transform:scaleX(0.9497);">2Dkp6x6_wave_hl_kpar001_ev016.fld</span><div style="left:62.200000000000045px;top:31.200000000000045px;width:24px;height:22px;background:#000"></div><div style="left:66.20000000000005px;top:34.200000000000045px;width:16px;height:16px;background:radial-gradient(circle at 52% 45%,#e01818 0,#e84010 1.8px,#c8c020 3.6px,#48c838 5.6px,#30b050 7px,#1a90a0 8.4px,#1040e0 10px,#0818a0 12px)"></div><span class="t" style="left:93.9px;top:33.0px;font-size:17.5px;color:#000;transform:scaleX(0.9497);">2Dkp6x6_wave_hl_kpar001_ev017.fld</span><div style="left:62.200000000000045px;top:58.200000000000045px;width:24px;height:22px;background:#000"></div><div style="left:66.20000000000005px;top:61.200000000000045px;width:16px;height:16px;background:radial-gradient(circle at 52% 45%,#e01818 0,#e84010 1.8px,#c8c020 3.6px,#48c838 5.6px,#30b050 7px,#1a90a0 8.4px,#1040e0 10px,#0818a0 12px)"></div><span class="t" style="left:93.9px;top:60.0px;font-size:17.5px;color:#fff;transform:scaleX(0.9497);">2Dkp6x6_wave_hl_kpar001_ev018.fld</span><div style="left:62.200000000000045px;top:85.20000000000005px;width:24px;height:22px;background:#000"></div><div style="left:66.20000000000005px;top:88.20000000000005px;width:16px;height:16px;background:radial-gradient(circle at 52% 45%,#e01818 0,#e84010 1.8px,#c8c020 3.6px,#48c838 5.6px,#30b050 7px,#1a90a0 8.4px,#1040e0 10px,#0818a0 12px)"></div><span class="t" style="left:93.9px;top:87.0px;font-size:17.5px;color:#000;transform:scaleX(0.9497);">2Dkp6x6_wave_hl_kpar001_ev019.fld</span><div style="left:62.200000000000045px;top:112.20000000000005px;width:24px;height:22px;background:#000"></div><div style="left:66.20000000000005px;top:115.20000000000005px;width:16px;height:16px;background:radial-gradient(circle at 52% 45%,#e01818 0,#e84010 1.8px,#c8c020 3.6px,#48c838 5.6px,#30b050 7px,#1a90a0 8.4px,#1040e0 10px,#0818a0 12px)"></div><span class="t" style="left:93.9px;top:114.0px;font-size:17.5px;color:#000;transform:scaleX(0.9497);">2Dkp6x6_wave_hl_kpar001_ev020.fld</span><div style="left:62.200000000000045px;top:139.20000000000005px;width:24px;height:22px;background:#000"></div><div style="left:66.20000000000005px;top:142.20000000000005px;width:16px;height:16px;background:radial-gradient(circle at 52% 45%,#e01818 0,#e84010 1.8px,#c8c020 3.6px,#48c838 5.6px,#30b050 7px,#1a90a0 8.4px,#1040e0 10px,#0818a0 12px)"></div><span class="t" style="left:93.9px;top:141.0px;font-size:17.5px;color:#000;transform:scaleX(0.9497);">2Dkp6x6_wave_hl_kpar001_ev021.fld</span><div style="left:62.200000000000045px;top:166.20000000000005px;width:24px;height:22px;background:#000"></div><div style="left:66.20000000000005px;top:169.20000000000005px;width:16px;height:16px;background:radial-gradient(circle at 52% 45%,#e01818 0,#e84010 1.8px,#c8c020 3.6px,#48c838 5.6px,#30b050 7px,#1a90a0 8.4px,#1040e0 10px,#0818a0 12px)"></div><span class="t" style="left:93.9px;top:168.0px;font-size:17.5px;color:#000;transform:scaleX(0.9497);">2Dkp6x6_wave_hl_kpar001_ev022.fld</span></div><div style="left:1460px;top:931px;width:23px;height:175.5px;background:#f0f0f0"></div><div style="left:1461px;top:959.8px;width:21px;height:25.5px;background:#cdcdcd"></div><svg style="left:1465px;top:939px" width="13" height="9" viewBox="0 0 13 9"><path d="M1.5 7.5l5-5 5 5" fill="none" stroke="#333" stroke-width="2"/></svg><svg style="left:1465px;top:1088.5px" width="13" height="9" viewBox="0 0 13 9"><path d="M1.5 1.5l5 5 5-5" fill="none" stroke="#333" stroke-width="2"/></svg><div style="left:1495.2px;top:853.2px;width:134.29999999999995px;height:34.39999999999998px;border:1px solid #8c8c8c;box-sizing:border-box;background:#ededed"></div><span class="t" style="left:1530.7px;top:864.4px;font-size:17.5px;color:#000;transform:scaleX(0.9737);">Check</span><div style="left:1636.3px;top:853.2px;width:104.20000000000005px;height:34.39999999999998px;border:1px solid #8c8c8c;box-sizing:border-box;background:#ededed"></div><span class="t" style="left:1648.5px;top:864.4px;font-size:17.5px;color:#a0a0a0;transform:scaleX(0.9252);">Select</span><div style="left:1495.2px;top:890.7px;width:134.29999999999995px;height:34.19999999999993px;border:1px solid #8c8c8c;box-sizing:border-box;background:#ededed"></div><span class="t" style="left:1530.7px;top:901.7px;font-size:17.5px;color:#000;transform:scaleX(0.9943);">Uncheck</span><div style="left:1636.3px;top:890.7px;width:104.20000000000005px;height:34.19999999999993px;border:1px solid #8c8c8c;box-sizing:border-box;background:#ededed"></div><span class="t" style="left:1648.5px;top:901.7px;font-size:17.5px;color:#000;transform:scaleX(0.9429);">Deselect</span><svg style="left:1502px;top:861px" width="26" height="21" viewBox="0 0 26 21"><defs><linearGradient id="gb" x1="0" y1="0.5" x2="1" y2="0.5"><stop offset="0" stop-color="#0a5ff0"/><stop offset="0.55" stop-color="#1a9cf0"/><stop offset="1" stop-color="#12e6ee"/></linearGradient></defs><path d="M1 6L5.5 4.3 10.8 13.2Q16 5 25.5 1.2Q18 7.5 12.8 19.5L9.2 19.5Z" fill="url(#gb)"/></svg><svg style="left:1502px;top:898px" width="26" height="21" viewBox="0 0 26 21"><defs><linearGradient id="gc" x1="0" y1="1" x2="1" y2="0"><stop offset="0" stop-color="#0a5ff0"/><stop offset="0.55" stop-color="#1a9cf0"/><stop offset="1" stop-color="#12e6ee"/></linearGradient></defs><path d="M3.5 2.5q10 6 20 17M23.5 2.5q-10 4-18.5 17" fill="none" stroke="url(#gc)" stroke-width="3.8" stroke-linecap="round"/></svg><div style="left:1495.2px;top:928.2px;width:251.6px;height:181px;border:1px solid #828790;box-sizing:border-box;background:#fff"></div><div style="left:1503.3px;top:935px;width:19px;height:19px;border:1px solid #333;box-sizing:border-box;background:#fff"></div><svg style="left:1503.3px;top:935px" width="19" height="19" viewBox="0 0 19 19"><path d="M3.5 9.5l4 4.2 8.2-8.4" fill="none" stroke="#333" stroke-width="1.8"/></svg><span class="t" style="left:1530.7px;top:936.2px;font-size:17.5px;color:#ff1a1a;">psi_squared</span><span class="t" style="left:27.0px;top:176.0px;font-size:22.8px;color:#000;">Horizontal and vertical slice</span><span class="t" style="left:27.0px;top:205.5px;font-size:22.8px;color:#000;">at cursor position</span><span class="t" style="left:24.5px;top:480.6px;font-size:22.8px;color:#000;transform:scaleX(1.0201);">Color mapping functionality</span><span class="t" style="left:1225.7px;top:37.8px;font-size:22.8px;color:#000;transform:scaleX(0.9838);">Coordinates and data value</span><span class="t" style="left:1236.2px;top:67.1px;font-size:22.8px;color:#000;transform:scaleX(1.0212);">of current cursor position</span><div style="left:15px;top:239px;width:1326px;height:3px;background:#000"></div><svg style="left:1338px;top:233px" width="16" height="16" viewBox="0 0 16 16"><path d="M7.5 1l6.5 6.5-6.5 6.5-6.5-6.5z" fill="#000"/></svg><div style="left:15px;top:514px;width:318px;height:3px;background:#000"></div><svg style="left:330px;top:508px" width="16" height="16" viewBox="0 0 16 16"><path d="M7.5 1l6.5 6.5-6.5 6.5-6.5-6.5z" fill="#000"/></svg><div style="left:1363.7px;top:105.2px;width:3.5px;height:29px;background:#000"></div><div style="left:1164px;top:132px;width:402px;height:3.3px;background:#000"></div><div style="left:1164px;top:132px;width:3.3px;height:30.6px;background:#000"></div><div style="left:1562.8px;top:132px;width:3.3px;height:30.6px;background:#000"></div><script>
(function(){
var c=document.getElementById('hm'); if(!c||!c.getContext) return;
var N=85, ctx=c.getContext('2d'), im=ctx.createImageData(N,N), d=im.data;
var V=[[68, 1, 84], [72, 24, 106], [71, 45, 123], [66, 64, 134], [59, 82, 139], [51, 99, 141], [44, 114, 142], [38, 130, 142], [33, 145, 140], [31, 160, 136], [40, 174, 128], [63, 188, 115], [94, 201, 98], [132, 212, 75], [173, 220, 48], [216, 226, 25], [253, 231, 37]];
function J1(x){var s=0,t=x/2,m=0;while(m<40){s+=t;m++;t*=-(x/2)*(x/2)/(m*(m+1));}return s;}
var K=3.5478703703703705, R0=1.977411592765613;
function f(x,y){var r=Math.sqrt(x*x+y*y); if(r>=R0) return 0; var th=Math.atan2(y,x), P=Math.pow(J1(K*r),2);
 if(r<1.08){ return 0.86*Math.pow(P/0.3386,0.8)*(1+0.2*Math.cos(2*(th-Math.PI/4))); }
 return 0.33*(P/0.1198)*(1+0.62*Math.cos(2*(th-Math.PI/4-0.17))); }
for(var j=0;j<N;j++){for(var i=0;i<N;i++){
 var x=-2.1+4.2*(i+0.5)/N+0.02, y=2.1-4.2*(j+0.5)/N;
 var v=f(x,y); if(v<0)v=0; if(v>1)v=1; var q=v*16, k=Math.min(15,Math.floor(q)), t=q-k, p=(j*N+i)*4;
 for(var z=0;z<3;z++) d[p+z]=Math.round(V[k][z]*(1-t)+V[k+1][z]*t); d[p+3]=255; }}
ctx.putImageData(im,0,0);
})();
</script></body></html>
